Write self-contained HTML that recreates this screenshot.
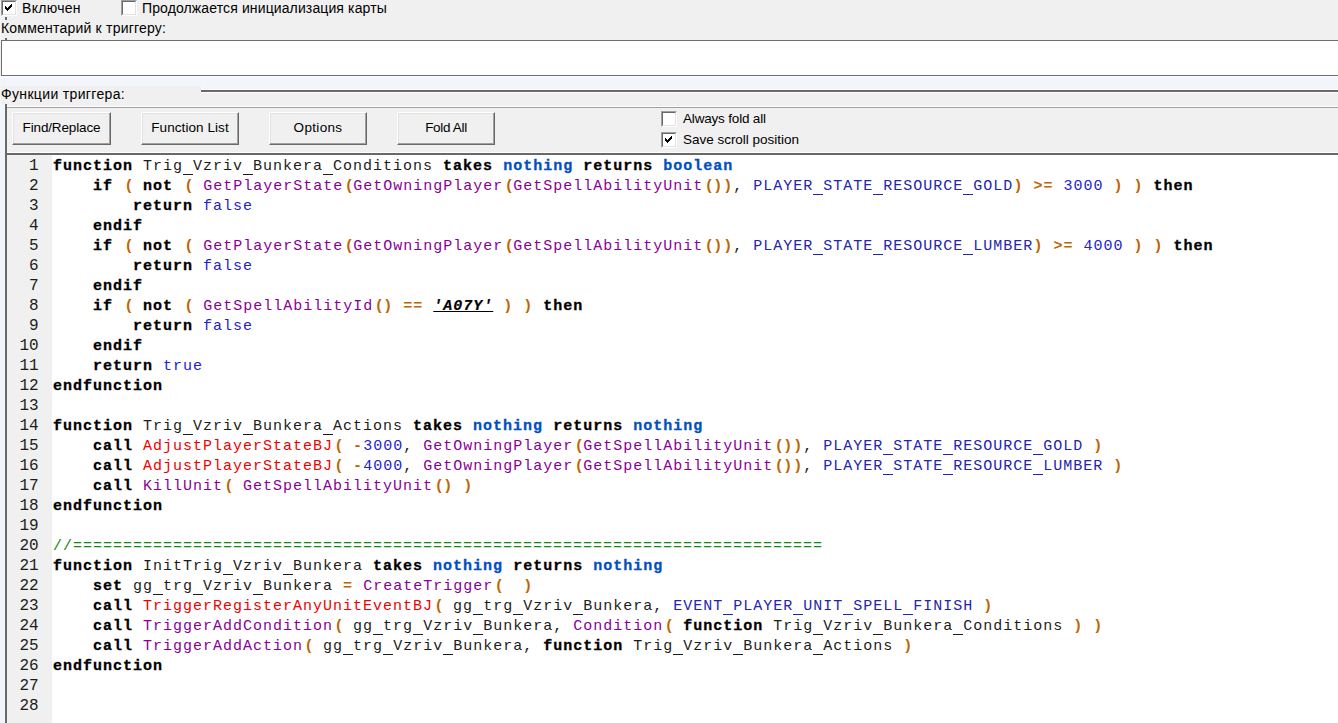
<!DOCTYPE html>
<html><head><meta charset="utf-8">
<style>
*{margin:0;padding:0;box-sizing:border-box}
html,body{width:1338px;height:723px;overflow:hidden;background:#f0f0f0;position:relative;font-family:"Liberation Sans",sans-serif;color:#000}
.abs{position:absolute}
.lbl{position:absolute;font-size:14px;line-height:16px;white-space:nowrap;color:#000}
.cb{position:absolute;width:16px;height:16px;background:#fff;border-top:1px solid #a0a0a0;border-left:1px solid #a0a0a0;border-right:1px solid #fff;border-bottom:1px solid #fff}
.cb::before{content:"";position:absolute;left:0;top:0;right:0;bottom:0;border-top:1px solid #696969;border-left:1px solid #696969;border-right:1px solid #e3e3e3;border-bottom:1px solid #e3e3e3}
.btn{position:absolute;top:112px;width:98px;height:33px;background:#f0f0f0;border-top:1px solid #fff;border-left:1px solid #fff;border-right:1px solid #696969;border-bottom:1px solid #696969;box-shadow:inset -1px -1px 0 #a0a0a0, inset 1px 1px 0 #e3e3e3;font-size:13.5px;line-height:29px;text-align:center;white-space:nowrap}
.code{position:absolute;left:53px;top:157px;font-family:"Liberation Mono",monospace;font-size:15px;line-height:20px;letter-spacing:1px;white-space:pre;color:#1c1c1c}
.nums{position:absolute;left:7px;top:156px;width:31.6px;text-align:right;font-family:"Liberation Mono",monospace;font-size:16px;line-height:20px;letter-spacing:0px;white-space:pre;color:#1c1c1c}
.k{font-weight:bold;color:#000;-webkit-text-stroke:0.3px #000}
.t{font-weight:bold;color:#0050c0;-webkit-text-stroke:0.3px #0050c0}
.b{color:#2222d0}
.p{color:#c06400;font-weight:bold}
.f{color:#8a0096}
.r{color:#f00000}
.c{color:#2424b0}
.n{color:#2222d0}
.s{font-weight:bold;font-style:italic;text-decoration:underline;color:#000;-webkit-text-stroke:0.2px #000}
.g{color:#108a10}
.lp{font-style:normal;position:relative;left:1.5px}
.u{display:inline-block;width:10px;height:0;border-bottom:1px solid;vertical-align:-5px}
.s .u{display:inline-block;width:10px;height:0;border-bottom:1px solid;vertical-align:-5px}
</style></head><body>
<!-- top checkboxes -->
<div class="cb" style="left:1px;top:0px"></div>
<svg class="abs" style="left:5px;top:4px" width="7" height="7" viewBox="0 0 7 7" shape-rendering="crispEdges"><path d="M6 0h1v1h-1z M5 1h2v1h-2z M0 2h1v1h-1z M4 2h3v1h-3z M0 3h2v1h-2z M3 3h3v1h-3z M0 4h5v1h-5z M1 5h3v1h-3z M2 6h1v1h-1z" fill="#000"/></svg>
<div class="lbl" style="left:22px;top:0px;letter-spacing:0.3px">Включен</div>
<div class="cb" style="left:121px;top:0px"></div>
<div class="lbl" style="left:142px;top:0px;letter-spacing:0.12px">Продолжается инициализация карты</div>
<div class="abs" style="left:0;top:15px;width:1px;height:25px;background:#f2f5fa"></div>
<div class="abs" style="left:5px;top:17px;width:2px;height:3px;background:#6a6a6a"></div>
<div class="abs" style="left:5px;top:38px;width:2px;height:2px;background:#6a6a6a"></div>
<div class="abs" style="left:0;top:89px;width:1px;height:2px;background:#6a6a6a"></div>
<div class="lbl" style="left:1px;top:20px;letter-spacing:0.21px">Комментарий к триггеру:</div>
<!-- comment textarea -->
<div class="abs" style="left:1px;top:40px;width:1340px;height:36px;background:#fff;border:1px solid #6e6e6e;border-right:none"></div>
<!-- light blue region -->
<div class="abs" style="left:0;top:76px;width:1338px;height:647px;background:#f2f5fa"></div>
<div class="abs" style="left:0;top:76px;width:1338px;height:2px;background:#f8f9fc"></div>
<div class="abs" style="left:201px;top:89px;width:1137px;height:1px;background:#f8f9fc"></div>
<!-- group box etched line -->
<div class="abs" style="left:201px;top:90px;width:1137px;height:2px;background:#696969"></div>
<div class="abs" style="left:201px;top:92px;width:1137px;height:1px;background:#fff"></div>
<!-- group inner gray -->
<div class="abs" style="left:7px;top:93px;width:1331px;height:62px;background:#f0f0f0"></div>
<div class="abs" style="left:1px;top:86px;width:200px;height:18px;background:#f0f0f0"></div>
<div class="lbl" style="left:1px;top:86px;letter-spacing:0.34px">Функции триггера:</div>
<div class="abs" style="left:5px;top:104px;width:2px;height:619px;background:#696969"></div>
<div class="abs" style="left:7px;top:106px;width:1331px;height:1px;background:#fff"></div>
<div class="abs" style="left:7px;top:107px;width:1331px;height:1px;background:#a0a0a0"></div>
<!-- buttons -->
<div class="btn" style="left:12px;width:99px;letter-spacing:-0.14px">Find/Replace</div>
<div class="btn" style="left:141px;letter-spacing:0.07px">Function List</div>
<div class="btn" style="left:269px;letter-spacing:0.32px">Options</div>
<div class="btn" style="left:397px;letter-spacing:-0.33px">Fold All</div>
<div class="cb" style="left:661px;top:111px"></div>
<div class="lbl" style="left:683px;top:111px;font-size:13.5px;letter-spacing:-0.18px">Always fold all</div>
<div class="cb" style="left:661px;top:132px"></div>
<svg class="abs" style="left:665px;top:136px" width="7" height="7" viewBox="0 0 7 7" shape-rendering="crispEdges"><path d="M6 0h1v1h-1z M5 1h2v1h-2z M0 2h1v1h-1z M4 2h3v1h-3z M0 3h2v1h-2z M3 3h3v1h-3z M0 4h5v1h-5z M1 5h3v1h-3z M2 6h1v1h-1z" fill="#000"/></svg>
<div class="lbl" style="left:683px;top:132px;font-size:13.5px;letter-spacing:-0.02px">Save scroll position</div>
<!-- editor -->
<div class="abs" style="left:7px;top:152px;width:1331px;height:1px;background:#fff"></div>
<div class="abs" style="left:7px;top:153px;width:1331px;height:2px;background:#696969"></div>
<div class="abs" style="left:7px;top:155px;width:1331px;height:568px;background:#fff"></div>
<div class="abs" style="left:7px;top:155px;width:45px;height:568px;background:#f0f0f0"></div>
<div class="nums">1
2
3
4
5
6
7
8
9
10
11
12
13
14
15
16
17
18
19
20
21
22
23
24
25
26
27
28</div>
<div class="code"><span class="k">function</span> Trig<i class="u"></i>Vzriv<i class="u"></i>Bunkera<i class="u"></i>Conditions <span class="k">takes</span> <span class="t">nothing</span> <span class="k">returns</span> <span class="t">boolean</span>
    <span class="k">if</span> <span class="p"><i class="lp">(</i></span> <span class="k">not</span> <span class="p"><i class="lp">(</i></span> <span class="f">GetPlayerState</span><span class="p"><i class="lp">(</i></span><span class="f">GetOwningPlayer</span><span class="p"><i class="lp">(</i></span><span class="f">GetSpellAbilityUnit</span><span class="p"><i class="lp">(</i>))</span>, <span class="c">PLAYER<i class="u"></i>STATE<i class="u"></i>RESOURCE<i class="u"></i>GOLD</span><span class="p">)</span> <span class="p">&gt;=</span> <span class="n">3000</span> <span class="p">)</span> <span class="p">)</span> <span class="k">then</span>
        <span class="k">return</span> <span class="b">false</span>
    <span class="k">endif</span>
    <span class="k">if</span> <span class="p"><i class="lp">(</i></span> <span class="k">not</span> <span class="p"><i class="lp">(</i></span> <span class="f">GetPlayerState</span><span class="p"><i class="lp">(</i></span><span class="f">GetOwningPlayer</span><span class="p"><i class="lp">(</i></span><span class="f">GetSpellAbilityUnit</span><span class="p"><i class="lp">(</i>))</span>, <span class="c">PLAYER<i class="u"></i>STATE<i class="u"></i>RESOURCE<i class="u"></i>LUMBER</span><span class="p">)</span> <span class="p">&gt;=</span> <span class="n">4000</span> <span class="p">)</span> <span class="p">)</span> <span class="k">then</span>
        <span class="k">return</span> <span class="b">false</span>
    <span class="k">endif</span>
    <span class="k">if</span> <span class="p"><i class="lp">(</i></span> <span class="k">not</span> <span class="p"><i class="lp">(</i></span> <span class="f">GetSpellAbilityId</span><span class="p"><i class="lp">(</i>)</span> <span class="p">==</span> <span class="s">'A07Y'</span> <span class="p">)</span> <span class="p">)</span> <span class="k">then</span>
        <span class="k">return</span> <span class="b">false</span>
    <span class="k">endif</span>
    <span class="k">return</span> <span class="b">true</span>
<span class="k">endfunction</span>

<span class="k">function</span> Trig<i class="u"></i>Vzriv<i class="u"></i>Bunkera<i class="u"></i>Actions <span class="k">takes</span> <span class="t">nothing</span> <span class="k">returns</span> <span class="t">nothing</span>
    <span class="k">call</span> <span class="r">AdjustPlayerStateBJ</span><span class="p"><i class="lp">(</i></span> <span class="p">-</span><span class="n">3000</span>, <span class="f">GetOwningPlayer</span><span class="p"><i class="lp">(</i></span><span class="f">GetSpellAbilityUnit</span><span class="p"><i class="lp">(</i>))</span>, <span class="c">PLAYER<i class="u"></i>STATE<i class="u"></i>RESOURCE<i class="u"></i>GOLD</span> <span class="p">)</span>
    <span class="k">call</span> <span class="r">AdjustPlayerStateBJ</span><span class="p"><i class="lp">(</i></span> <span class="p">-</span><span class="n">4000</span>, <span class="f">GetOwningPlayer</span><span class="p"><i class="lp">(</i></span><span class="f">GetSpellAbilityUnit</span><span class="p"><i class="lp">(</i>))</span>, <span class="c">PLAYER<i class="u"></i>STATE<i class="u"></i>RESOURCE<i class="u"></i>LUMBER</span> <span class="p">)</span>
    <span class="k">call</span> <span class="f">KillUnit</span><span class="p"><i class="lp">(</i></span> <span class="f">GetSpellAbilityUnit</span><span class="p"><i class="lp">(</i>)</span> <span class="p">)</span>
<span class="k">endfunction</span>

<span class="g">//===========================================================================</span>
<span class="k">function</span> InitTrig<i class="u"></i>Vzriv<i class="u"></i>Bunkera <span class="k">takes</span> <span class="t">nothing</span> <span class="k">returns</span> <span class="t">nothing</span>
    <span class="k">set</span> gg<i class="u"></i>trg<i class="u"></i>Vzriv<i class="u"></i>Bunkera <span class="p">=</span> <span class="f">CreateTrigger</span><span class="p"><i class="lp">(</i></span>  <span class="p">)</span>
    <span class="k">call</span> <span class="r">TriggerRegisterAnyUnitEventBJ</span><span class="p"><i class="lp">(</i></span> gg<i class="u"></i>trg<i class="u"></i>Vzriv<i class="u"></i>Bunkera, <span class="c">EVENT<i class="u"></i>PLAYER<i class="u"></i>UNIT<i class="u"></i>SPELL<i class="u"></i>FINISH</span> <span class="p">)</span>
    <span class="k">call</span> <span class="f">TriggerAddCondition</span><span class="p"><i class="lp">(</i></span> gg<i class="u"></i>trg<i class="u"></i>Vzriv<i class="u"></i>Bunkera, <span class="f">Condition</span><span class="p"><i class="lp">(</i></span> <span class="k">function</span> Trig<i class="u"></i>Vzriv<i class="u"></i>Bunkera<i class="u"></i>Conditions <span class="p">)</span> <span class="p">)</span>
    <span class="k">call</span> <span class="f">TriggerAddAction</span><span class="p"><i class="lp">(</i></span> gg<i class="u"></i>trg<i class="u"></i>Vzriv<i class="u"></i>Bunkera, <span class="k">function</span> Trig<i class="u"></i>Vzriv<i class="u"></i>Bunkera<i class="u"></i>Actions <span class="p">)</span>
<span class="k">endfunction</span>

</div>
</body></html>
